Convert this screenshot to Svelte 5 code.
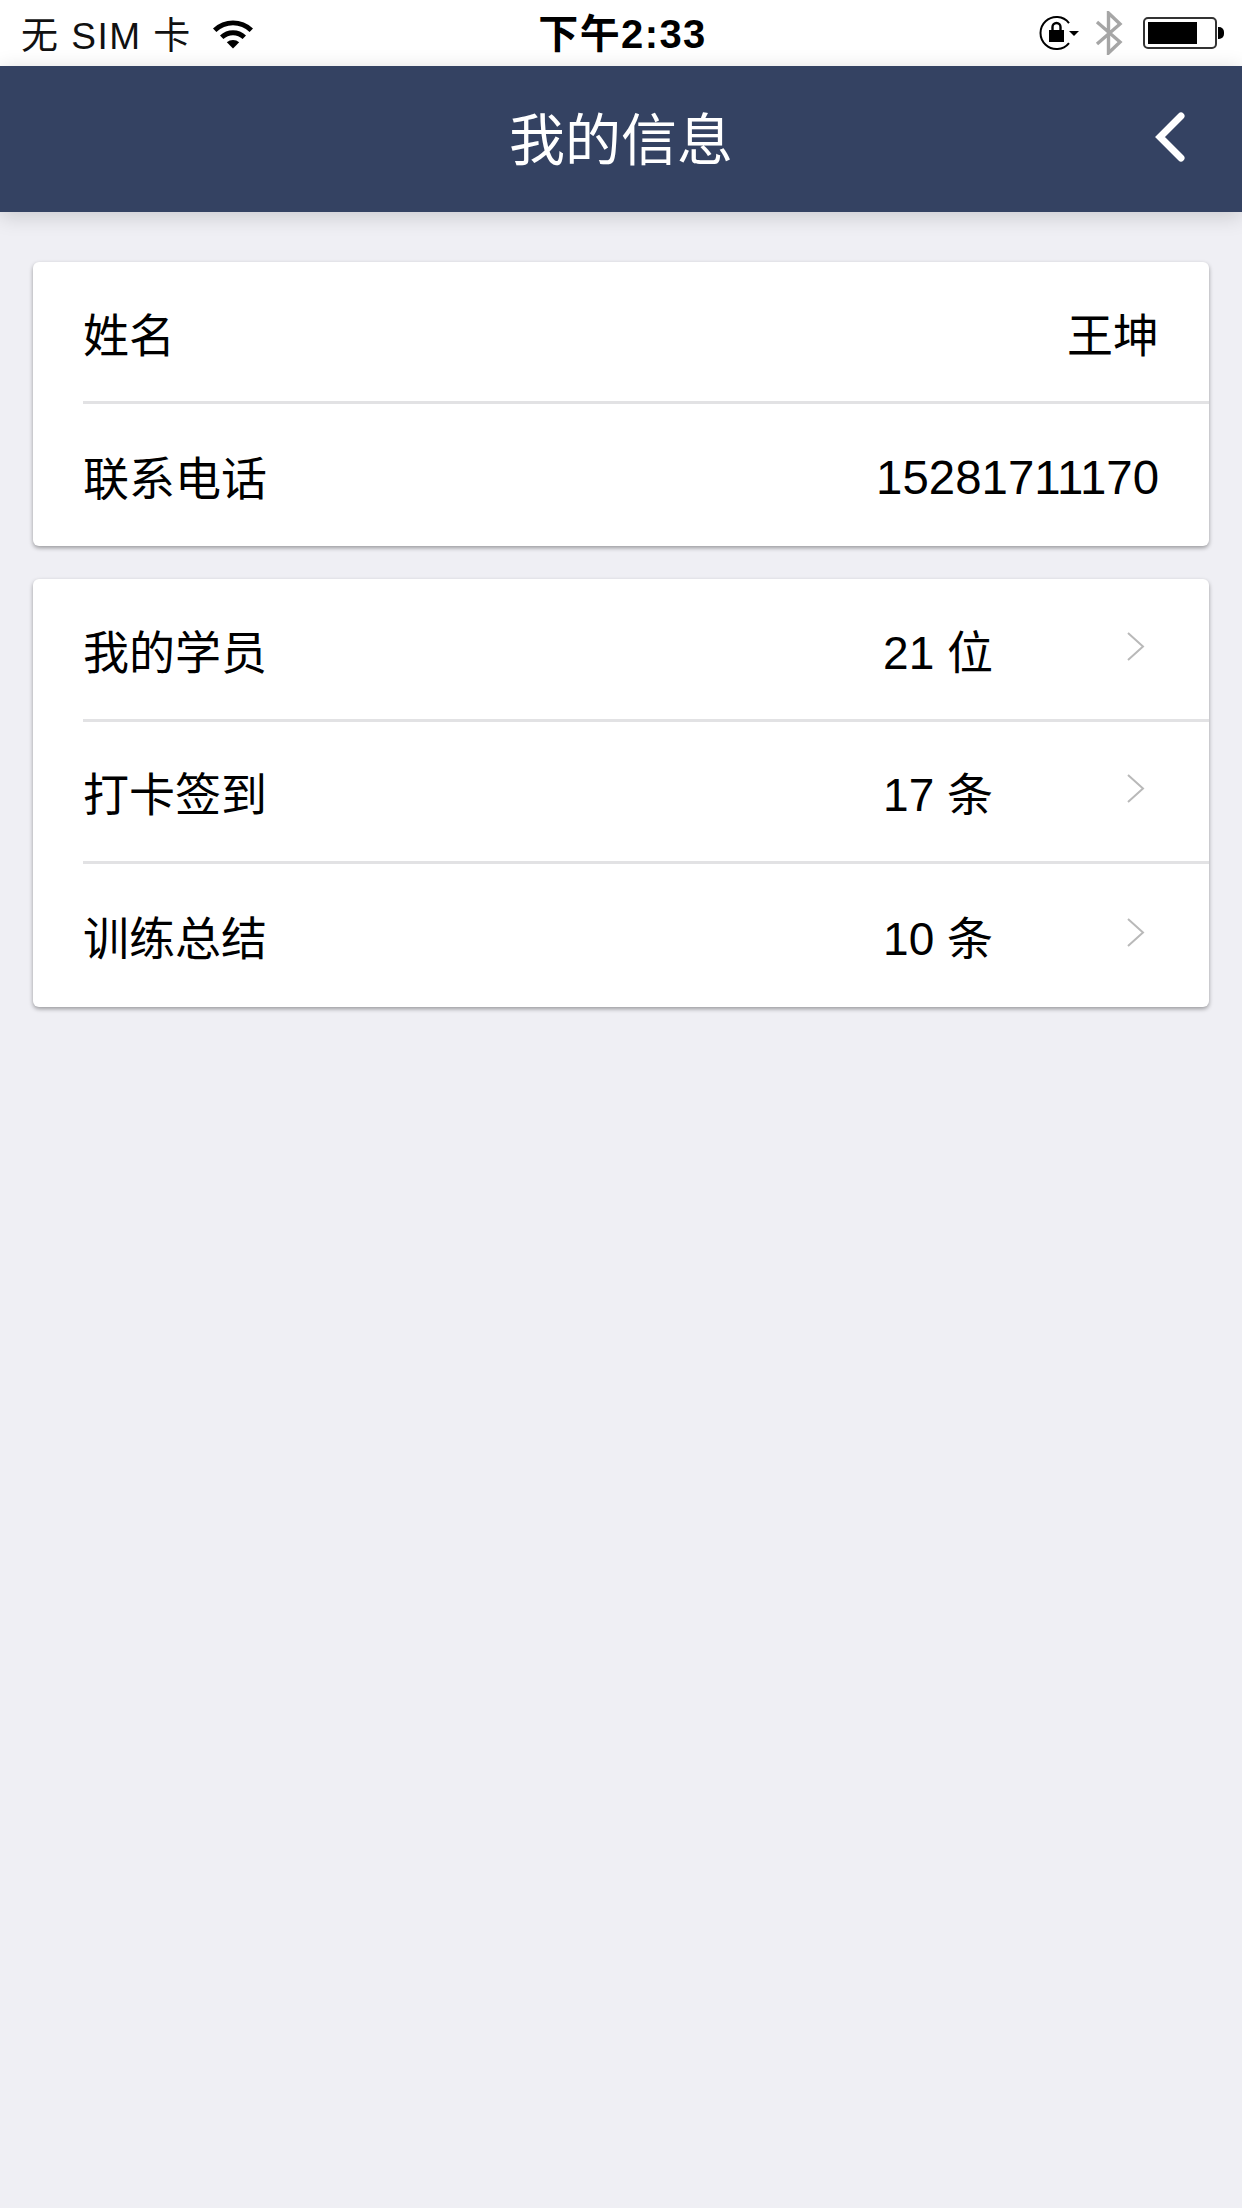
<script>
  const infoRows = [
    { label: '姓名', value: '王坤', digits: false },
    { label: '联系电话', value: '15281711170', digits: true }
  ];

  const linkRows = [
    { label: '我的学员', count: 21, unit: '位' },
    { label: '打卡签到', count: 17, unit: '条' },
    { label: '训练总结', count: 10, unit: '条' }
  ];
</script>

<div class="page">
  <div class="status-bar">
    <div class="status-left">
      <span class="carrier">无 SIM 卡</span>
      <svg class="wifi" width="42" height="32" viewBox="0 0 42 32">
        <path d="M1 11.5 A29 29 0 0 1 41 11.5 L37.6 15 A24 24 0 0 0 4.4 15 Z" fill="#000" />
        <path d="M8 18.5 A19 19 0 0 1 34 18.5 L30.6 22 A14 14 0 0 0 11.4 22 Z" fill="#000" />
        <path d="M14.8 25.2 A9.5 9.5 0 0 1 27.2 25.2 L21 31.5 Z" fill="#000" />
      </svg>
    </div>
    <span class="clock">下午2:33</span>
    <div class="status-right">
      <svg class="rotation" width="40" height="36" viewBox="0 0 40 36">
        <path d="M30 8 A16 16 0 1 0 30 28" fill="none" stroke="#000" stroke-width="2" />
        <path d="M30 16 H40 L35 21 Z" fill="#000" />
        <rect x="10" y="15" width="15" height="12" fill="#000" />
        <path d="M13.5 15 V12 A4 4 0 0 1 21.5 12 V15" fill="none" stroke="#000" stroke-width="2.4" />
      </svg>
      <svg class="bluetooth" width="28" height="44" viewBox="0 0 28 44">
        <path d="M2 11 L25 31 L13.5 42 V2 L25 13 L2 33" fill="none" stroke="#a6a6a6" stroke-width="3.4" />
      </svg>
      <div class="battery">
        <div class="battery-body"><div class="battery-level" style="width: 76%"></div></div>
        <div class="battery-tip"></div>
      </div>
    </div>
  </div>

  <header class="nav">
    <h1>我的信息</h1>
    <svg class="back" width="34" height="52" viewBox="0 0 34 52">
      <path d="M28 5 L7 26 L28 47" fill="none" stroke="#fff" stroke-width="7" stroke-linecap="round" />
    </svg>
  </header>

  <main class="content">
    <section class="card">
      {#each infoRows as row}
        <div class="row">
          <span>{row.label}</span>
          <span class:digits={row.digits}>{row.value}</span>
        </div>
      {/each}
    </section>

    <section class="card links">
      {#each linkRows as row}
        <div class="row link">
          <span>{row.label}</span>
          <div class="row-end">
            <span class="count">{row.count} {row.unit}</span>
            <svg class="chevron" width="20" height="32" viewBox="0 0 20 32">
              <path d="M2 2 L17 15.5 L2 29" fill="none" stroke="#b9b9b9" stroke-width="2" />
            </svg>
          </div>
        </div>
      {/each}
    </section>
  </main>
</div>

<style>
  :global(body) {
    margin: 0;
    background: #efeff4;
  }

  .page {
    width: 1242px;
    height: 2208px;
    overflow: hidden;
    background: #efeff4;
    color: #000;
    font-family: "Liberation Sans", "Noto Sans CJK SC", sans-serif;
  }

  .status-bar {
    height: 66px;
    background: #fff;
    display: grid;
    grid-template-columns: 1fr auto 1fr;
    align-items: center;
    padding: 0 18px 0 21px;
    box-sizing: border-box;
  }

  .status-left {
    display: flex;
    align-items: center;
    gap: 20px;
  }

  .carrier {
    font-size: 37px;
    letter-spacing: 1.5px;
    color: #111;
  }

  .clock {
    font-size: 40px;
    font-weight: 700;
    letter-spacing: 1.4px;
    margin-bottom: 4px;
  }

  .status-right {
    display: flex;
    align-items: center;
    justify-content: flex-end;
    gap: 20px;
  }

  .rotation {
    margin-right: -4px;
  }

  .battery {
    display: flex;
    align-items: center;
    gap: 1px;
  }

  .battery-body {
    width: 74px;
    height: 32px;
    box-sizing: border-box;
    border: 2px solid #333;
    border-radius: 5px;
    padding: 3px;
  }

  .battery-level {
    height: 100%;
    background: #000;
  }

  .battery-tip {
    width: 6px;
    height: 12px;
    background: #000;
    border-radius: 0 5px 5px 0;
  }

  .nav {
    position: relative;
    height: 146px;
    background: #344262;
    display: flex;
    align-items: center;
    justify-content: center;
    box-shadow: 0 4px 20px rgba(0, 0, 0, 0.16);
  }

  .nav h1 {
    margin: 0 0 8px;
    color: #fff;
    font-size: 56px;
    font-weight: 400;
  }

  .back {
    position: absolute;
    right: 55px;
    top: 45px;
  }

  .content {
    padding: 50px 33px 0 33px;
    display: flex;
    flex-direction: column;
    gap: 33px;
  }

  .card {
    background: #fff;
    border-radius: 6px;
    padding-left: 50px;
    box-shadow: 0 2px 4px rgba(0, 0, 0, 0.36);
  }

  .row {
    height: 142px;
    box-sizing: border-box;
    display: flex;
    align-items: center;
    justify-content: space-between;
    padding-right: 50px;
    font-size: 46px;
    border-bottom: 3px solid #e2e2e4;
  }

  .row:last-child {
    border-bottom: none;
  }

  .digits {
    font-size: 47.4px;
    padding-top: 5px;
  }

  .row.link {
    height: 142.5px;
    padding-right: 63px;
  }

  .row-end {
    display: flex;
    align-items: center;
  }

  .count {
    width: 110px;
    text-align: right;
    margin-right: 133px;
  }

  .chevron {
    margin-top: -4px;
  }
</style>
